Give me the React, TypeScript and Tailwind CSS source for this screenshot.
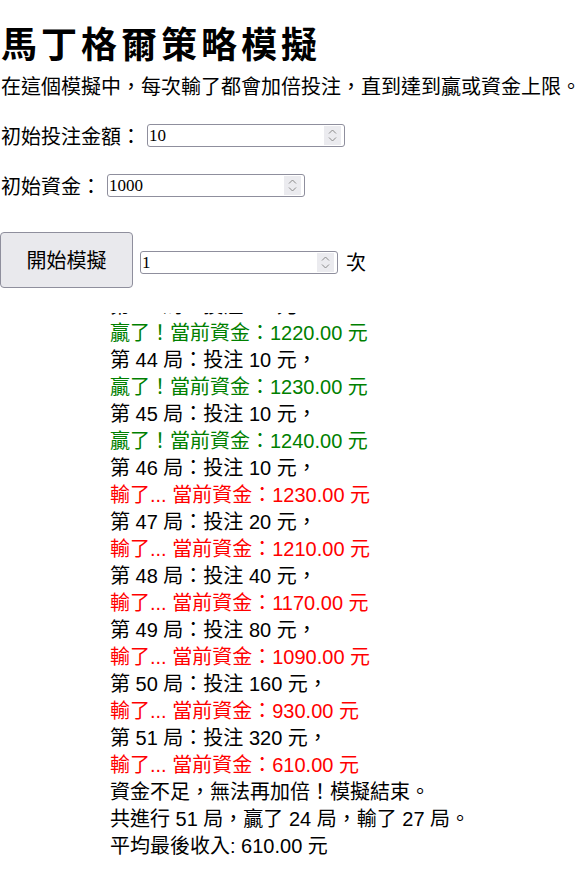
import React from 'react'

const font = "font-['Liberation_Sans','Noto_Sans_CJK_TC',sans-serif]"

type Line = { text: string; tone?: 'win' | 'lose' }

const lines: Line[] = [
  { text: '第 42 局：投注 10 元，' },
  { text: '贏了！當前資金：1210.00 元', tone: 'win' },
  { text: '第 43 局：投注 10 元，' },
  { text: '贏了！當前資金：1220.00 元', tone: 'win' },
  { text: '第 44 局：投注 10 元，' },
  { text: '贏了！當前資金：1230.00 元', tone: 'win' },
  { text: '第 45 局：投注 10 元，' },
  { text: '贏了！當前資金：1240.00 元', tone: 'win' },
  { text: '第 46 局：投注 10 元，' },
  { text: '輸了... 當前資金：1230.00 元', tone: 'lose' },
  { text: '第 47 局：投注 20 元，' },
  { text: '輸了... 當前資金：1210.00 元', tone: 'lose' },
  { text: '第 48 局：投注 40 元，' },
  { text: '輸了... 當前資金：1170.00 元', tone: 'lose' },
  { text: '第 49 局：投注 80 元，' },
  { text: '輸了... 當前資金：1090.00 元', tone: 'lose' },
  { text: '第 50 局：投注 160 元，' },
  { text: '輸了... 當前資金：930.00 元', tone: 'lose' },
  { text: '第 51 局：投注 320 元，' },
  { text: '輸了... 當前資金：610.00 元', tone: 'lose' },
  { text: '資金不足，無法再加倍！模擬結束。' },
  { text: '共進行 51 局，贏了 24 局，輸了 27 局。' },
  { text: '平均最後收入: 610.00 元' },
]

function Spinner() {
  return (
    <div className="w-[17px] h-[19px] bg-[#ebebef] flex items-center justify-center">
      <svg width="11" height="15" viewBox="0 0 11 15" fill="none" stroke="#8a8a8a" strokeWidth="1">
        <path d="M2 5.5 L5.5 2 L9 5.5" />
        <path d="M2 9.5 L5.5 13 L9 9.5" />
      </svg>
    </div>
  )
}

function NumberBox({ value }: { value: string }) {
  return (
    <div className="w-[198px] h-[23px] border border-[#8f8f9d] rounded-[3px] bg-white flex items-center justify-between pl-[1px] pr-[3px]">
      <span className="font-['Liberation_Serif',serif] text-[17px] leading-none text-black">{value}</span>
      <Spinner />
    </div>
  )
}

export default function App() {
  return (
    <div className={`${font} text-black bg-white w-[580px] h-[878px] overflow-hidden`}>
      <h1 className="mt-[18px] h-[48px] pl-[1px] text-[36px] leading-[48px] font-bold tracking-[4px] font-['Noto_Sans_CJK_TC',sans-serif] whitespace-nowrap">
        馬丁格爾策略模擬
      </h1>
      <p className="mt-[6px] text-[20px] leading-[27px] pl-[1px] whitespace-nowrap font-['Noto_Sans_CJK_TC',sans-serif]">
        在這個模擬中，每次輸了都會加倍投注，直到達到贏或資金上限。
      </p>

      <div className="mt-[25px] flex items-center gap-[6px] h-[23px] pl-[1px]">
        <span className="text-[20px] font-['Noto_Sans_CJK_TC',sans-serif]">初始投注金額：</span>
        <NumberBox value="10" />
      </div>

      <div className="mt-[27px] flex items-center gap-[6px] h-[23px] pl-[1px]">
        <span className="text-[20px] font-['Noto_Sans_CJK_TC',sans-serif]">初始資金：</span>
        <NumberBox value="1000" />
      </div>

      <div className="mt-[35px] flex items-start h-[56px]">
        <button className="w-[133px] h-[56px] bg-[#e9e9ed] border border-[#8f8f9d] rounded-[4px] text-[20px] font-['Noto_Sans_CJK_TC',sans-serif] text-black">
          開始模擬
        </button>
        <div className="ml-[7px] mt-[15px] flex items-center gap-[8px]">
          <NumberBox value="1" />
          <span className="text-[20px] font-['Noto_Sans_CJK_TC',sans-serif]">次</span>
        </div>
      </div>

      <div className="mt-[25px] ml-[110px] h-[547px] overflow-hidden flex flex-col justify-end">
        {lines.map((line, i) => (
          <div
            key={i}
            className={`text-[20px] leading-[27px] whitespace-nowrap ${
              line.tone === 'win' ? 'text-[#008000]' : line.tone === 'lose' ? 'text-[#ff0000]' : 'text-black'
            }`}
          >
            {line.text}
          </div>
        ))}
      </div>
    </div>
  )
}
